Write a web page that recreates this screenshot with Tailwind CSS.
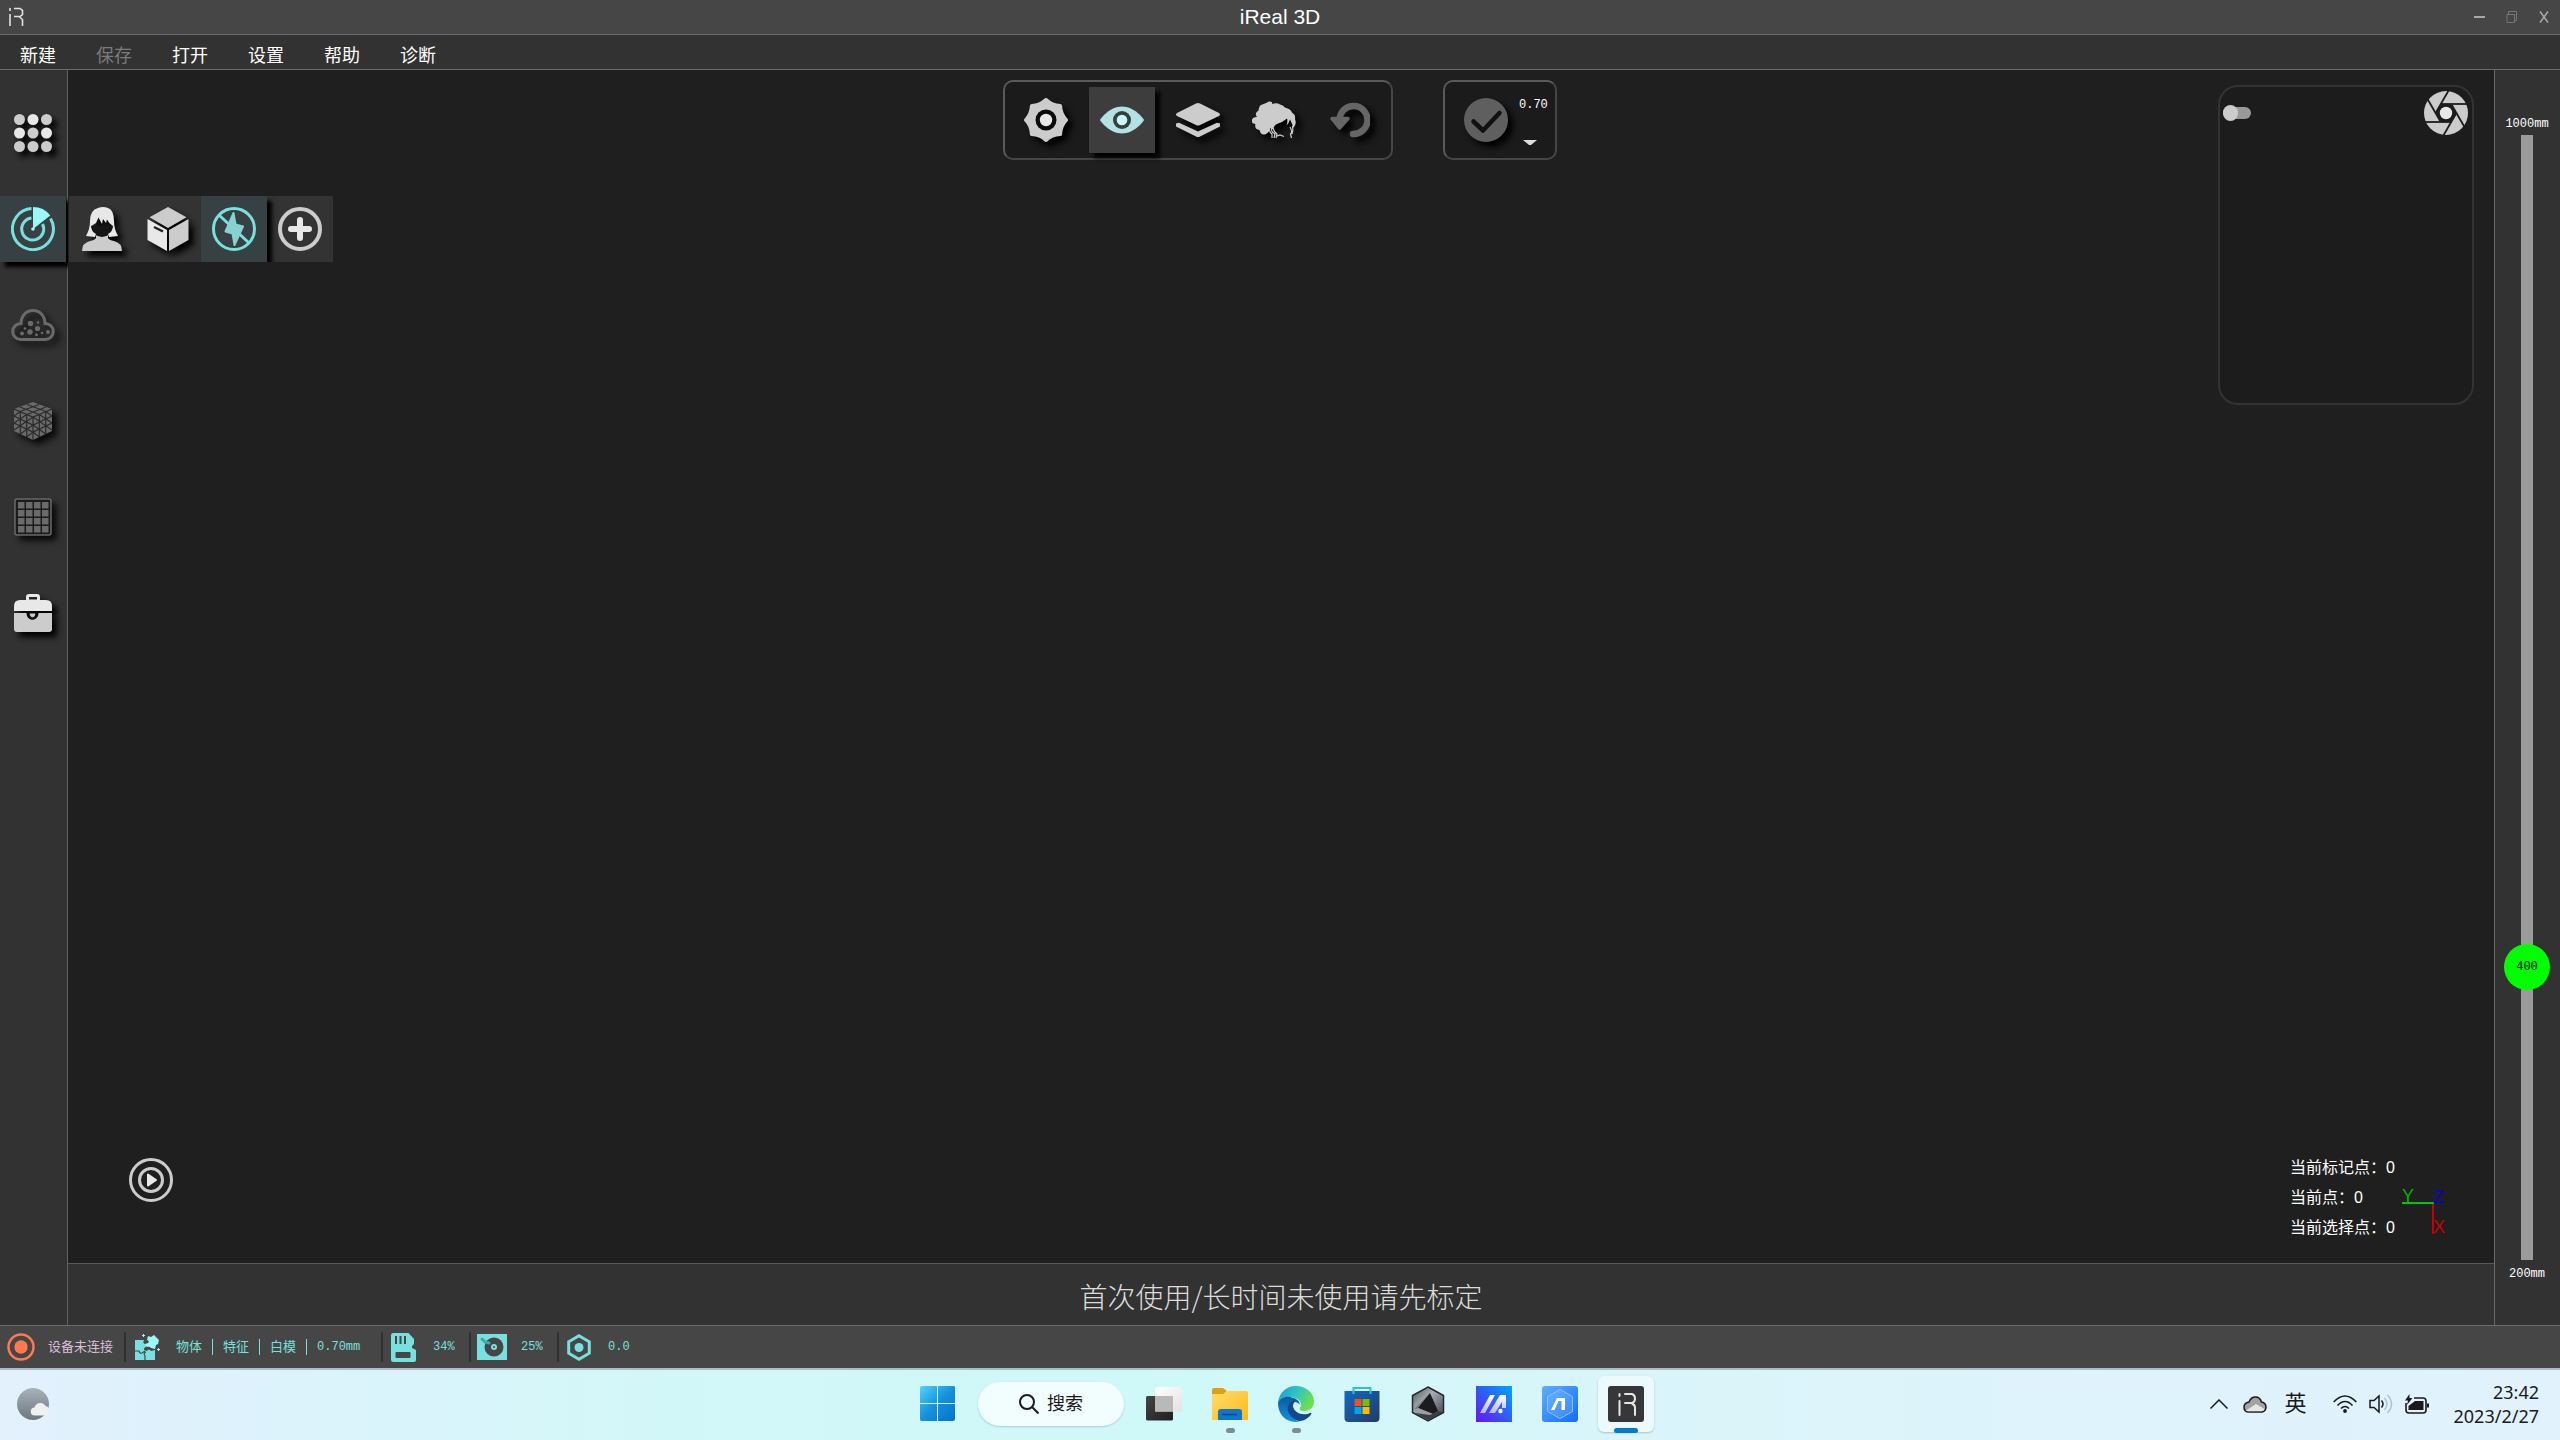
<!DOCTYPE html>
<html lang="zh-CN">
<head>
  <meta charset="UTF-8">
  <meta name="viewport" content="width=device-width, initial-scale=1.0">
  <title>iReal 3D</title>
  <script src="https://cdn.jsdelivr.net/npm/@tailwindcss/browser@4"></script>
</head>
<body class="h-screen flex flex-col overflow-hidden bg-[#1f1f1f] text-white font-['Liberation_Sans','Noto_Sans_CJK_SC',sans-serif]">

  <!-- Title bar -->
  <header class="grid grid-cols-[1fr_auto_1fr] items-center h-[35px] shrink-0 bg-[#464646] border-b border-[#646a70]">
    <svg class="ml-2 w-4 h-5" viewBox="0 0 16 20" fill="none" stroke="#e0e0e0" stroke-width="1.6" aria-label="iR">
      <path d="M2 1v3M2 7v12M6 1.500h6l2.500 2v4L12 9.500H6M11 9.500l3.500 3V19"/>
    </svg>
    <h1 class="text-[21px] leading-6">iReal 3D</h1>
    <div class="flex justify-end items-center text-[#a8a8a8]">
      <button class="w-8 h-8 flex items-center justify-center" aria-label="最小化">
        <svg class="w-3 h-3" viewBox="0 0 12 12"><path d="M0 6h11" stroke="currentColor" stroke-width="2"/></svg>
      </button>
      <button class="w-8 h-8 flex items-center justify-center text-[#777]" aria-label="还原">
        <svg class="w-3 h-3" viewBox="0 0 12 12" fill="none" stroke="currentColor"><path d="M1 3.500h7.500v8H1zM2.500 3V.5h8v9H9"/></svg>
      </button>
      <button class="w-8 h-8 flex items-center justify-center" aria-label="关闭">
        <svg class="w-3 h-3" viewBox="0 0 12 12" fill="none" stroke="currentColor" stroke-width="1.500"><path d="M2 .5l8 11M10 .5l-8 11"/></svg>
      </button>
    </div>
  </header>

  <!-- Menu -->
  <nav class="flex items-end h-[35px] shrink-0 bg-[#323232] border-b border-[#6b6b6b] text-lg leading-[26px]">
    <button class="px-5">新建</button>
    <button class="px-5 text-[#7b7b7b]" disabled>保存</button>
    <button class="px-5">打开</button>
    <button class="px-5">设置</button>
    <button class="px-5">帮助</button>
    <button class="px-5">诊断</button>
  </nav>

  <div class="flex flex-1 min-h-0">

    <!-- Workflow steps -->
    <aside class="flex flex-col gap-[30px] w-[68px] shrink-0 pt-[30px] bg-[#323232] border-r border-[#5f6362]">
      <button class="w-[66px] h-[66px] flex items-center justify-center" aria-label="工程">
        <svg class="w-[38px] h-[38px] drop-shadow-[5px_5px_3px_#000]" viewBox="0 0 38 38" fill="#ccc">
          <circle cx="5.500" cy="5.500" r="5.500"/><circle cx="19" cy="5.500" r="5.500" fill="#e8e8e8"/><circle cx="32.500" cy="5.500" r="5.500"/>
          <circle cx="5.500" cy="19" r="5.500" fill="#e8e8e8"/><circle cx="19" cy="19" r="5.500"/><circle cx="32.500" cy="19" r="5.500" fill="#e8e8e8"/>
          <circle cx="5.500" cy="32.500" r="5.500"/><circle cx="19" cy="32.500" r="5.500"/><circle cx="32.500" cy="32.500" r="5.500"/>
        </svg>
      </button>
      <button class="w-[66px] h-[66px] flex items-center justify-center bg-[#374042] shadow-[5px_5px_4px_#000]" aria-label="扫描">
        <svg class="w-11 h-11" viewBox="0 0 44 44" fill="none" stroke="#78e0df" stroke-width="3">
          <path d="M20.500 1.600A20.500 20.500 0 1 0 39.500 11.500"/>
          <path d="M20.500 11.100A11 11 0 1 0 31.500 17"/>
          <path d="M22 0A22 22 0 0 1 39.300 8.400L24 20.500L22 22z" fill="#9cf7f7" stroke="none"/>
          <circle cx="22" cy="22" r="1.800" fill="#9cf7f7" stroke="none"/>
        </svg>
      </button>
      <button class="w-[66px] h-[66px] flex items-center justify-center" aria-label="点云" disabled>
        <svg class="w-11 h-8 drop-shadow-[5px_5px_3px_#0a0a0a]" viewBox="0 0 44 32" fill="none" stroke="#6a6a6a" stroke-width="3">
          <path d="M9.500 30.500a8 8 0 0 1 .5-16C10 7 15 1.500 22 1.500S34 7 34 14.500a8 8 0 0 1 .5 16z"/>
          <g fill="#6a6a6a" stroke="none"><circle cx="19.500" cy="14.500" r="2.700"/><circle cx="27" cy="13.500" r="1.300"/><circle cx="26.500" cy="19.500" r="2.600"/><circle cx="14" cy="19.500" r="1.300"/><circle cx="19" cy="23" r="2.700"/><circle cx="11" cy="24.500" r="2"/><circle cx="31" cy="24" r="1.300"/><circle cx="37" cy="23" r="2"/><circle cx="25.500" cy="25.800" r="1.500"/></g>
        </svg>
      </button>
      <button class="w-[66px] h-[66px] flex items-center justify-center" aria-label="网格" disabled>
        <svg class="w-[38px] h-[38px] drop-shadow-[5px_5px_3px_#0a0a0a]" viewBox="0 0 38 38" fill="none">
          <path d="M19 0L38 7v22L19 38L0 29V7z" fill="#6a6a6a"/>
          <g stroke="#2b2b2b" stroke-width="1.200">
            <path d="M0 7l19 8l19-8M0 14l19 9l19-9M0 21l19 9l19-9M6 5l19 7.500M13 2.500l19 7M32 5L13 12.500M25 2.500l-19 7"/>
            <path d="M6.300 9.500V32M12.700 12.500V35M19 15v23M25.300 12.500V35M31.700 9.500V32"/>
            <path d="M0 14l6.300-4.500M0 21l12.700-8.500M0 28l19-13M6.300 32L19 23M12.700 35l6.300-5M38 14l-6.300-4.500M38 21l-12.700-8.500M38 28L19 15M31.700 32L19 23M25.300 35L19 30"/>
          </g>
        </svg>
      </button>
      <button class="w-[66px] h-[66px] flex items-center justify-center" aria-label="贴图" disabled>
        <svg class="w-[38px] h-[38px] drop-shadow-[5px_5px_3px_#0a0a0a]" viewBox="0 0 38 38">
          <rect x="1" y="1" width="36" height="36" rx="2" fill="#1b1b1b" stroke="#6a6a6a" stroke-width="1.500"/>
          <path d="M4 7.200h30.500M4 15.200h30.500M4 23.200h30.500M4 31.200h30.500" stroke="#6a6a6a" stroke-width="6.500" stroke-dasharray="6.500 1.500"/>
        </svg>
      </button>
      <button class="w-[66px] h-[66px] flex items-center justify-center" aria-label="工具箱">
        <svg class="w-[38px] h-[38px] drop-shadow-[5px_5px_3px_#000]" viewBox="0 0 38 38">
          <path d="M12 6V3q0-3 3-3h8q3 0 3 3v3h6q6 0 6 6v5H0v-5q0-6 6-6zM15 3v2.500h8V3z" fill="#e8e8e8" fill-rule="evenodd"/>
          <path d="M0 19h12.500c0 9 12 9 12 0H38v16q0 3-3 3H3q-3 0-3-3z" fill="#ccc"/>
          <path d="M15.700 19.500h5.600c0 5-5.600 5-5.600 0z" fill="#ccc"/>
        </svg>
      </button>
    </aside>

    <!-- Viewport and hint line -->
    <div class="flex flex-col flex-1 min-w-0">
      <main class="relative flex-1 min-h-0 bg-[#1f1f1f]">

        <div class="absolute inset-x-0 top-[10px] flex justify-center gap-[50px] pr-0.5">
          <div class="flex gap-[10px] px-2 py-[5px] rounded-[10px] border-2 border-[#464646] border-t-[#5a5a5a] border-l-[#5a5a5a] bg-[#1b1b1b]">
            <button class="w-[66px] h-[66px] flex items-center justify-center" aria-label="参数">
              <svg class="w-11 h-11 drop-shadow-[5px_5px_3px_#000]" viewBox="0 0 44 44">
                <path d="M22 2Q28 7.600 36.100 7.900Q36.400 16 42 22Q36.400 28 36.100 36.100Q28 36.400 22 42Q16 36.400 7.900 36.100Q7.600 28 2 22Q7.600 16 7.900 7.900Q16 7.600 22 2z" fill="#ccc" stroke="#ccc" stroke-width="4" stroke-linejoin="round"/>
                <circle cx="22" cy="22" r="10.500" fill="#0b0b0b"/><circle cx="22" cy="22" r="6.200" fill="#e8e8e8"/>
              </svg>
            </button>
            <button class="w-[66px] h-[66px] flex items-center justify-center bg-[#3d3d3d] shadow-[5px_5px_4px_#000]" aria-label="预览">
              <svg class="w-11 h-7" viewBox="0 0 44 28">
                <path d="M0 14C1 12 10 .5 22 .5S43 12 44 14C43 16 34 27.500 22 27.500S1 16 0 14z" fill="#b2e2e2"/>
                <circle cx="22" cy="14" r="9" fill="#3a3d3d"/><circle cx="22" cy="14" r="5.300" fill="#c6fafa"/>
              </svg>
            </button>
            <button class="w-[66px] h-[66px] flex items-center justify-center" aria-label="图层">
              <svg class="w-11 h-[34px] drop-shadow-[5px_5px_3px_#000]" viewBox="0 0 44 34" fill="#ccc">
                <path d="M20 .6q2-1 4 0L43 10q2 1.500 0 3L24 21.900q-2 1-4 0L1 13q-2-1.500 0-3z"/>
                <path d="M0 20.500l3-.8L22 28.500l19-8.800l3 .8v3L24 33.500q-2 1-4 0L0 23.500z"/>
              </svg>
            </button>
            <button class="w-[66px] h-[66px] flex items-center justify-center" aria-label="头发">
              <svg class="w-11 h-[38px] drop-shadow-[5px_5px_3px_#000]" viewBox="0 0 44 38">
                <path d="M9 4Q14 2 17 .5Q21 0 20 3Q25 1.500 28 3.500Q31 4 33 6.500Q39 8 40 11.500Q44 14 43 18Q45 23 41.500 27Q40 22 38 18.500Q37 22 34.500 24.500Q36 20 35 17.500Q31 21 26 22.500Q21.500 24 21.500 28Q20 29 18 26.500Q18 31 14 33Q9 35 7.500 29Q2 28 3.500 23Q-1 23 0 18.500Q1 15.500 5 16Q2 12 6.500 9.500Q7 5 9 4z" fill="#ccc"/>
                <path d="M19 26q0 5 4 7l-1 4M17 28q1 4 3 5v4M21 27q1 4 4 6l-1 4M24 35.500l4-1.500l4 1.500M38 26q3 5 .5 7l1 4M40.500 25q1 4-.5 8" fill="none" stroke="#ccc" stroke-width="1.200"/>
              </svg>
            </button>
            <button class="w-[66px] h-[66px] flex items-center justify-center" aria-label="撤销">
              <svg class="w-10 h-9 drop-shadow-[5px_5px_3px_#000]" viewBox="0 0 40 36" fill="none" stroke="#666" stroke-width="6.500" stroke-linecap="round">
                <path d="M23 32A14 14 0 1 0 9.500 18"/>
                <path d="M2 16.500h16l-8.500 9.500z" fill="#666" stroke-width="3.500" stroke-linejoin="round"/>
              </svg>
            </button>
          </div>
          <div class="flex px-2 py-[5px] rounded-[10px] border-2 border-[#464646] border-t-[#5a5a5a] border-l-[#5a5a5a] bg-[#1b1b1b]">
            <button class="w-[66px] h-[66px] flex items-center justify-center" aria-label="完成" disabled>
              <svg class="w-11 h-11 drop-shadow-[5px_5px_3px_#000]" viewBox="0 0 44 44" fill="none">
                <circle cx="22" cy="22" r="22" fill="#5f5f5f"/>
                <path d="M9.500 23.500l9.500 9L35.500 15" stroke="#111" stroke-width="4.500" stroke-linecap="round" stroke-linejoin="round"/>
              </svg>
            </button>
            <button class="flex flex-col items-start justify-between w-7 pt-[10px] pb-2 font-['Liberation_Mono',monospace] text-xs leading-4">
              <span>0.70</span>
              <svg class="ml-1 w-3.5 h-[5px]" viewBox="0 0 14 5"><path d="M0 0h14L8 5H6z" fill="#ddd"/></svg>
            </button>
          </div>
        </div>

        <!-- Scan mode flyout -->
        <div class="absolute left-px top-[126px] flex overflow-hidden bg-[#333]">
          <button class="w-[66px] h-[66px] flex items-center justify-center" aria-label="人像">
            <svg class="w-10 h-11 drop-shadow-[5px_5px_3px_#000]" viewBox="0 0 40 44">
              <path d="M14 27h12v4q1 2 6 3q8 2 8 10H0q0-8 8-10q5-1 6-3z" fill="#ccc"/>
              <path d="M8 19h24q-1 4-4 8q-8 6-16 0q-3-4-4-8z" fill="#151515"/>
              <path d="M8 14Q8 3 16 1Q21-1 26 1Q32 3 32 14Q32 22 36 29L27 30L26 27Q31 24 31 19Q27 17 25 12.500L24 16L21 12L20 17L16.500 10.500L14 16Q11 18 9 19Q9 24 14 27L13 30L4 29Q8 22 8 14z" fill="#e8e8e8"/>
            </svg>
          </button>
          <button class="w-[66px] h-[66px] flex items-center justify-center" aria-label="物体">
            <svg class="w-[42px] h-11 drop-shadow-[5px_5px_3px_#000]" viewBox="0 0 42 44">
              <path d="M21 0L39.500 10.300L21 21L2.500 10.300z" fill="#ccc"/>
              <path d="M.5 12L20 23v21L.5 33z" fill="#e8e8e8"/>
              <path d="M41.500 12L22 23v21l19.500-11z" fill="#ccc"/>
              <path d="M7 20l9 4.500" stroke="#222" stroke-width="2.400"/>
            </svg>
          </button>
          <button class="relative z-10 w-[66px] h-[66px] flex items-center justify-center bg-[#374042] shadow-[5px_5px_4px_#000]" aria-label="关闭闪光">
            <svg class="w-11 h-11" viewBox="0 0 44 44" fill="none" stroke="#78e0df" stroke-width="3">
              <circle cx="22" cy="22" r="20.500"/>
              <path d="M7.500 8.500L36.500 35.500"/>
              <path d="M21.500 6L13.500 24.500L20.500 26.500L22.500 38L31 19.500L23.500 17.500z" fill="#86d2d0" stroke="#86d2d0" stroke-width="2" stroke-linejoin="round"/>
            </svg>
          </button>
          <button class="w-[66px] h-[66px] flex items-center justify-center" aria-label="添加">
            <svg class="w-11 h-11" viewBox="0 0 44 44" fill="none">
              <circle cx="22" cy="22" r="20" stroke="#ccc" stroke-width="4"/>
              <path d="M22 13v18M13 22h18" stroke="#e8e8e8" stroke-width="6" stroke-linecap="round"/>
            </svg>
          </button>
        </div>

        <!-- Camera preview -->
        <section class="absolute right-5 top-[15px] flex items-start justify-between w-64 h-80 px-1 py-1 pl-[3px] rounded-[20px] border-2 border-[#333] bg-[#1c1c1c]">
          <input type="checkbox" aria-label="相机预览" class="appearance-none relative mt-4 w-7 h-3 rounded-full bg-[#999] before:absolute before:left-0 before:-top-0.5 before:w-[15px] before:h-4 before:rounded-full before:bg-[#ccc]">
          <button aria-label="拍照">
            <svg class="w-11 h-11" viewBox="-22 -22 44 44">
              <circle r="22" fill="#ccc"/>
              <path d="M-5.200-9h10.400L10.400 0L5.200 9H-5.200L-10.400 0z" fill="#1c1c1c"/>
              <g stroke="#1c1c1c" stroke-width="1.800">
                <path d="M-4-9H22"/><path d="M-4-9H22" transform="rotate(60)"/><path d="M-4-9H22" transform="rotate(120)"/>
                <path d="M-4-9H22" transform="rotate(180)"/><path d="M-4-9H22" transform="rotate(240)"/><path d="M-4-9H22" transform="rotate(300)"/>
              </g>
              <circle r="6.200" fill="#e8e8e8"/>
            </svg>
          </button>
        </section>

        <button class="absolute left-[61px] bottom-[61px]" aria-label="开始扫描">
          <svg class="w-11 h-11" viewBox="0 0 44 44" fill="none" stroke="#ccc" stroke-width="3">
            <circle cx="22" cy="22" r="20.500"/><circle cx="22" cy="22" r="11.500"/>
            <path d="M19 16.500v11l8-5.500z" fill="#e8e8e8" stroke="#e8e8e8" stroke-width="2" stroke-linejoin="round"/>
          </svg>
        </button>

        <div class="absolute right-10 bottom-5 flex items-end">
          <div class="text-base leading-[30px] w-28 whitespace-nowrap">
            <p>当前标记点：0</p>
            <p>当前点：0</p>
            <p>当前选择点：0</p>
          </div>
          <svg class="w-[52px] h-[52px] mb-[6px] font-['Liberation_Sans',sans-serif] text-lg" viewBox="0 0 52 52">
            <path d="M0 18h32" stroke="#00c800" stroke-width="2"/>
            <path d="M31 19v30" stroke="#c80000" stroke-width="2"/>
            <text x="0" y="17" fill="#00b400">Y</text>
            <text x="31" y="18" fill="#0000e0">Z</text>
            <text x="31" y="48" fill="#c80000">X</text>
          </svg>
        </div>
      </main>

      <p class="h-[62px] flex items-center justify-center shrink-0 pt-0.5 border-t border-[#555a5a] bg-[#323232] text-[28px] font-light font-['Noto_Sans_CJK_SC',sans-serif] text-[#dcdcdc]">首次使用/长时间未使用请先标定</p>
    </div>

    <!-- Distance range -->
    <aside class="flex flex-col items-center gap-1 w-[66px] shrink-0 pt-[47px] pb-11 pr-px border-l border-[#646a70] bg-[#323232] font-['Liberation_Mono',monospace] text-xs leading-[14px]">
      <label for="distance">1000mm</label>
      <div class="relative flex-1 min-h-0 w-[46px]">
        <input id="distance" type="range" min="200" max="1000" value="400" class="block appearance-none w-[46px] h-full [writing-mode:vertical-lr] [direction:rtl] bg-[linear-gradient(90deg,transparent_17px,#9b9b9b_17px,#9b9b9b_29px,transparent_29px)] [&::-webkit-slider-thumb]:appearance-none [&::-webkit-slider-thumb]:w-[46px] [&::-webkit-slider-thumb]:h-[46px] [&::-webkit-slider-thumb]:rounded-full [&::-webkit-slider-thumb]:bg-[#00ff00]">
        <output id="distance-value" for="distance" class="absolute inset-x-0 h-[46px] leading-[46px] text-center text-black pointer-events-none">400</output>
      </div>
      <span class="pt-[3px]">200mm</span>
    </aside>
  </div>

  <!-- Status bar -->
  <footer class="flex items-center h-[43px] shrink-0 border-t border-[#6b6b6b] bg-[#464646] text-[13px] leading-4 text-[#78e0df]">
    <div class="flex items-center gap-[13px] w-[124px] pl-[7px] text-[#d8bfd8]">
      <svg class="w-7 h-7" viewBox="0 0 28 28"><circle cx="14" cy="14" r="12.500" fill="none" stroke="#ff7850" stroke-width="2.500"/><circle cx="14" cy="14" r="6.700" fill="#ff7850"/></svg>
      <span>设备未连接</span>
    </div>
    <div class="flex items-center gap-4 w-[257px] h-[30px] pl-2 border-l-2 border-[#303030]">
      <svg class="w-[26px] h-[27px]" viewBox="0 0 26 27" fill="#78e0df">
        <path d="M1 6h9q-2 4 2 4q2 1 0 3q-2 0-2 3l3 1q2-3 4 0l4-1v10H1z"/>
        <path d="M14 2l3 1l3-2l5 5l-1 4l-2 1l-1 4l-4-1q-2-2-4-1l-2-3l3-1q2-2-1-3z" fill="#9cf7f7"/>
        <path d="M1 17h4q1 3 3 2l3-2M11 26v-4q-2-3 1-4" fill="none" stroke="#464646" stroke-width="1.200"/>
        <path d="M9.500 0v3M8 1.500h3M24.500 14v3M23 15.500h3" stroke="#9cf7f7"/>
      </svg>
      <p class="flex items-center gap-[10px]">
        <span>物体</span><span class="w-px h-4 bg-[#78e0df]"></span><span>特征</span><span class="w-px h-4 bg-[#78e0df]"></span><span>白模</span><span class="w-px h-4 bg-[#78e0df]"></span>
        <span class="font-['Liberation_Mono',monospace] text-xs leading-4">0.70mm</span>
      </p>
    </div>
    <div class="flex items-center gap-[17px] w-[88px] h-[30px] pl-2 border-l-2 border-[#303030] font-['Liberation_Mono',monospace] text-xs leading-4">
      <svg class="w-[25px] h-[29px]" viewBox="0 0 25 29">
        <path d="M2.500 0h15L23 6v5l-2 2v2l4 2v10q0 2-2 2H2.500Q0 29 0 27V2Q0 0 2.500 0z" fill="#78e0df"/>
        <path d="M5 3v8M9.500 3v8M14 3v8" stroke="#404848" stroke-width="2"/><rect x="4.500" y="19" width="15" height="6" rx="1" fill="#404848"/>
      </svg>
      <span>34%</span>
    </div>
    <div class="flex items-center gap-[14px] w-[88px] h-[30px] pl-[6px] border-l-2 border-[#303030] font-['Liberation_Mono',monospace] text-xs leading-4">
      <svg class="w-[30px] h-[26px]" viewBox="0 0 30 26">
        <rect width="30" height="26" fill="#78e0df"/><circle cx="17" cy="13" r="9.500" fill="#464646"/><circle cx="17" cy="13" r="3" fill="#78e0df"/><circle cx="17" cy="13" r="1" fill="#464646"/>
        <path d="M5 5l3 3l4 1" stroke="#3fa9a9" stroke-width="3" fill="none" stroke-linecap="round"/>
      </svg>
      <span>25%</span>
    </div>
    <div class="flex items-center gap-[17px] h-[30px] pl-2 border-l-2 border-[#303030] font-['Liberation_Mono',monospace] text-xs leading-4">
      <svg class="w-6 h-[27px]" viewBox="0 0 24 27"><path d="M12 1.800l10.300 6v11.400L12 25.200l-10.300-6V7.800z" fill="none" stroke="#78e0df" stroke-width="3"/><circle cx="12" cy="13.500" r="4.500" fill="#78e0df"/></svg>
      <span>0.0</span>
    </div>
  </footer>

  <!-- Windows taskbar -->
  <footer class="grid grid-cols-[1fr_auto_1fr] items-center h-[72px] shrink-0 pl-1 pb-0.5 border-t-2 border-[#abbcc2] bg-[linear-gradient(90deg,#e3f1fd_0%,#dcf3fc_12%,#d2f7f8_26%,#cff8f9_46%,#d6f6fa_58%,#ddf4fb_72%,#e1f2fd_100%)] text-[#1a1a1a]">
    <button class="ml-3 w-9 h-9" aria-label="天气">
      <svg class="w-9 h-9" viewBox="0 0 36 36">
        <defs>
          <linearGradient id="moon" x1="0" y1="0" x2="0" y2="1"><stop offset="0" stop-color="#a9b2bb"/><stop offset="1" stop-color="#6d7780"/></linearGradient>
        </defs>
        <circle cx="17" cy="18" r="16" fill="url(#moon)"/>
        <path d="M19 29.500a4 4 0 0 1-.5-8a6 6 0 0 1 11-1.500a5 5 0 0 1 1 9.500z" fill="#eef0f2"/>
      </svg>
    </button>

    <div class="flex items-center">
      <button class="w-[66px] h-[68px] flex items-center justify-center" aria-label="开始">
        <svg class="w-9 h-9" viewBox="0 0 36 36">
          <defs><linearGradient id="win" x1="0" y1="0" x2="1" y2="1"><stop offset="0" stop-color="#4fd3fb"/><stop offset=".5" stop-color="#1491dd"/><stop offset="1" stop-color="#0571cd"/></linearGradient></defs>
          <path d="M2 0h15v17H0V2q0-2 2-2zM18 0h16q1 0 1 1.500V17H18zM0 18h17v17H1.500Q0 35 0 33zM18 18h17v15q0 2-2 2H18z" fill="url(#win)"/>
        </svg>
      </button>
      <button class="flex items-center justify-center gap-2 w-[146px] h-11 mx-[7px] rounded-full bg-[#f2fdfe] shadow-[0_1px_2px_rgba(0,60,60,0.2)] text-lg leading-7">
        <svg class="w-5 h-5" viewBox="0 0 20 20" fill="none" stroke="#1a1a1a" stroke-width="2"><circle cx="8" cy="8" r="7"/><path d="M13 13l6.500 6.500"/></svg>
        搜索
      </button>
      <button class="w-[66px] h-[68px] flex items-center justify-center" aria-label="任务视图">
        <svg class="w-9 h-9" viewBox="0 0 36 36">
          <defs>
            <linearGradient id="tvd" x1="0" y1="0" x2="1" y2="1"><stop offset="0" stop-color="#454545"/><stop offset="1" stop-color="#1e1e1e"/></linearGradient>
            <linearGradient id="tvl" x1="0" y1="0" x2="1" y2="1"><stop offset="0" stop-color="#fff"/><stop offset="1" stop-color="#e2e2e2"/></linearGradient>
          </defs>
          <rect y="10" width="27" height="24.500" rx="1.500" fill="url(#tvd)"/>
          <rect x="9" y="1" width="27" height="24.500" rx="1.500" fill="url(#tvl)"/>
          <path d="M9 10h18v15.500H9z" fill="#b9b9b9"/>
        </svg>
      </button>
      <button class="relative w-[66px] h-[68px] flex items-center justify-center" aria-label="文件资源管理器">
        <svg class="w-9 h-9" viewBox="0 0 36 36">
          <defs><linearGradient id="fold" x1="0" y1="0" x2="1" y2="1"><stop offset="0" stop-color="#ffdd6e"/><stop offset="1" stop-color="#fdb913"/></linearGradient></defs>
          <path d="M0 4q0-2 2-2h9l4 3h-1v6H0z" fill="#dfa00b"/>
          <path d="M0 8h11l4-3h19q2 0 2 2v27H0z" fill="url(#fold)"/>
          <path d="M6 34v-8q0-3 3-3h18q3 0 3 3v8z" fill="#0f76cd"/><path d="M10 28.500h15" stroke="#064a93" stroke-width="1.500"/>
        </svg>
        <span class="absolute bottom-[5px] w-[9px] h-[5px] rounded-full bg-[#7b8f92]"></span>
      </button>
      <button class="relative w-[66px] h-[68px] flex items-center justify-center" aria-label="Edge">
        <svg class="w-9 h-9" viewBox="0 0 36 36">
          <defs>
            <linearGradient id="edg" x1="0" y1="0" x2="1" y2=".5"><stop offset="0" stop-color="#1797d5"/><stop offset=".5" stop-color="#2fc2c5"/><stop offset="1" stop-color="#6de04a"/></linearGradient>
            <linearGradient id="edb" x1="0" y1="0" x2="0" y2="1"><stop offset="0" stop-color="#0c5a9e"/><stop offset="1" stop-color="#1490e0"/></linearGradient>
          </defs>
          <path d="M0 17C1 6 9 0 18 0c10 0 18 7 18 15.500c0 6-4.500 9.500-9.500 9.500c-4 0-6-1.500-4-4c2-4-1-8-7-9.500C9 10 3 12 0 17z" fill="url(#edg)"/>
          <path d="M0 17C2 12 8 9.500 14 11.500c5 1 8 4 7.500 7C19 15 14 15 11.500 19C9 25 13 34 22 35.500C10 38 0 30 0 17z" fill="url(#edb)"/>
          <path d="M15 14.500c-6 3-7 9-3 14.500c3 5 9 7 13 5.500c4-1.500 7-4 8.500-7q0-1-1-.8C25 30.500 16 27 15 20c0-2 1-4 3-5q-1-1-3-.5z" fill="#114a8b"/>
        </svg>
        <span class="absolute bottom-[5px] w-[9px] h-[5px] rounded-full bg-[#7b8f92]"></span>
      </button>
      <button class="w-[66px] h-[68px] flex items-center justify-center" aria-label="Microsoft Store">
        <svg class="w-9 h-9" viewBox="0 0 36 36">
          <defs><linearGradient id="store" x1="0" y1="0" x2="1" y2="1"><stop offset="0" stop-color="#0d6cc0"/><stop offset="1" stop-color="#243a66"/></linearGradient></defs>
          <path d="M9.500 8V2h17v6" fill="none" stroke="#2fb8ec" stroke-width="2"/>
          <path d="M.5 5h35v27q0 4-4 4h-27q-4 0-4-4z" fill="url(#store)"/>
          <path d="M9.500 5v3M26.500 5v3" stroke="#2fb8ec" stroke-width="2"/>
          <path d="M10.500 13h7v7h-7z" fill="#f25022"/><path d="M18.500 13h7v7h-7z" fill="#7fba00"/><path d="M10.500 21h7v7h-7z" fill="#00a4ef"/><path d="M18.500 21h7v7h-7z" fill="#ffb900"/>
        </svg>
      </button>
      <button class="w-[66px] h-[68px] flex items-center justify-center" aria-label="Armoury Crate">
        <svg class="w-9 h-9" viewBox="0 0 36 36">
          <defs><linearGradient id="arm" x1="0" y1="0" x2="1" y2="1"><stop offset="0" stop-color="#4a4f55"/><stop offset=".4" stop-color="#a9afb6"/><stop offset="1" stop-color="#33363b"/></linearGradient></defs>
          <path d="M18 1l15.500 8.500v17L18 35L2.500 26.500v-17z" fill="url(#arm)" stroke="#26282b" stroke-width="1.500"/>
          <path d="M3 24L20 7L10 22z" fill="#787d84"/>
          <path d="M20 7l8 18l-5 3L8 22z" fill="#1b1c1f"/>
          <path d="M4 25l4-3l15 6l-5 6z" fill="#9a9fa6"/>
          <path d="M5 27l15 2l8-4l4 1l-14 8z" fill="#3a3d42"/>
        </svg>
      </button>
      <button class="w-[66px] h-[68px] flex items-center justify-center" aria-label="MyASUS">
        <svg class="w-9 h-9" viewBox="0 0 36 36">
          <defs>
            <linearGradient id="asus" x1="1" y1="0" x2="0" y2="1"><stop offset="0" stop-color="#00a6ff"/><stop offset=".5" stop-color="#2f5cf5"/><stop offset="1" stop-color="#6c12f2"/></linearGradient>
            <linearGradient id="bars" x1="0" y1="0" x2="0" y2="1"><stop offset="0" stop-color="#fff"/><stop offset="1" stop-color="#b9b4fb"/></linearGradient>
          </defs>
          <path d="M0 0h36v36H0z" fill="url(#asus)"/>
          <path d="M14 9h5L9 27H4zM24 9h6v13h-4v-6l-7 11h-6z" fill="url(#bars)"/><circle cx="24.500" cy="25" r="2.200" fill="#fff"/>
        </svg>
      </button>
      <button class="w-[66px] h-[68px] flex items-center justify-center" aria-label="奥创中心">
        <svg class="w-9 h-9" viewBox="0 0 36 36">
          <defs><linearGradient id="aura" x1="0" y1="0" x2="1" y2="1"><stop offset="0" stop-color="#5cb0ff"/><stop offset="1" stop-color="#146cff"/></linearGradient></defs>
          <rect width="36" height="36" rx="3" fill="url(#aura)"/>
          <path d="M18 3.500l12.500 7v15L18 32.500L5.500 25.500v-15z" fill="#fff" fill-opacity=".12" stroke="#8cc2ff"/>
          <path d="M15 12h8v12h-3.500v-9h-3L12.500 24H9l3.500-7z" fill="#fff"/>
        </svg>
      </button>
      <button class="relative w-[66px] h-[68px] flex items-center justify-center" aria-label="iReal 3D">
        <span class="flex items-center justify-center w-14 h-14 rounded-md bg-[#ecf9fd] shadow-[0_1px_2px_rgba(0,60,60,0.25)]">
          <svg class="w-9 h-9" viewBox="0 0 36 36" fill="none" stroke="#e6e6e6" stroke-width="2" stroke-linecap="round" stroke-linejoin="round">
            <rect width="36" height="36" rx="3" fill="#37373a" stroke="none"/>
            <path d="M11.500 8v2M11.500 15v14M17 8h7q3 1 3 4.500t-3 4.500h-7M24 17.500q3 1.500 3 4V29"/>
          </svg>
        </span>
        <span class="absolute bottom-[5px] w-6 h-[5px] rounded-full bg-[#0078d4]"></span>
      </button>
    </div>

    <div class="flex items-center justify-end pr-[21px]">
      <button class="mr-[15px]" aria-label="显示隐藏的图标">
        <svg class="w-[18px] h-[10px]" viewBox="0 0 18 10" fill="none" stroke="currentColor" stroke-width="1.500"><path d="M.5 9.500L9 1l8.500 8.500"/></svg>
      </button>
      <button class="mr-[18px]" aria-label="OneDrive">
        <svg class="w-6 h-[17px]" viewBox="0 0 24 17"><path d="M6 16q-5 0-5-5q0-4 5-5q2-5 6.500-5t6 5q4.500 1 4.500 5t-4 5z" fill="#a3a3a3" stroke="#1a1a1a" stroke-width="1.500"/><path d="M3 14.500L13 8l8.500 5q-.5 2.300-3 2.300H5q-1.500 0-2-.8z" fill="#e6e6e6"/></svg>
      </button>
      <button class="mr-[26px] text-[22px] leading-7">英</button>
      <button class="flex items-center gap-3 mr-6" aria-label="网络、音量、电池">
        <svg class="w-6 h-[18px]" viewBox="0 0 24 18" fill="none" stroke="currentColor" stroke-width="1.600"><path d="M.7 7Q12-5 23.300 7M4.500 10.500q7.500-8 15 0M8 13.500q4-4 8 0"/><circle cx="12" cy="16" r="1.900" fill="currentColor" stroke="none"/></svg>
        <svg class="w-6 h-5" viewBox="0 0 24 20" fill="none" stroke="currentColor" stroke-width="1.500"><path d="M1 6.500h4L10 2v16l-5-4.500H1zM12.500 6.500q3 3.500 0 7"/><path d="M15.500 4q5 6 0 12M18.500 1q8 9 0 18" stroke="#b4c3c9"/></svg>
        <svg class="w-[25px] h-5" viewBox="0 0 25 20" fill="none" stroke="currentColor" stroke-width="1.600"><path d="M9 4h9q3 0 3 3v9q0 3-3 3H4q-3 0-3-3V9"/><path d="M22 9.500h2v4h-2zM10 7h8.500v9h-15v-4z" fill="currentColor" stroke="none"/><path d="M4.500 0L0 6.500h3L2 11l5.500-7H4.500z" fill="currentColor" stroke="none"/></svg>
      </button>
      <time class="text-right text-lg leading-6 font-['Noto_Sans',sans-serif]" datetime="2023-02-27T23:42">23:42<br>2023/2/27</time>
    </div>
  </footer>

  <script>
    // keep the number on top of the slider thumb
    const range = document.getElementById('distance');
    const label = document.getElementById('distance-value');
    const moveLabel = () => {
      const pos = (range.value - range.min) / (range.max - range.min);
      label.textContent = range.value;
      label.style.bottom = `calc((100% - 46px) * ${pos})`;
    };
    range.addEventListener('input', moveLabel);
    moveLabel();
  </script>
</body>
</html>
